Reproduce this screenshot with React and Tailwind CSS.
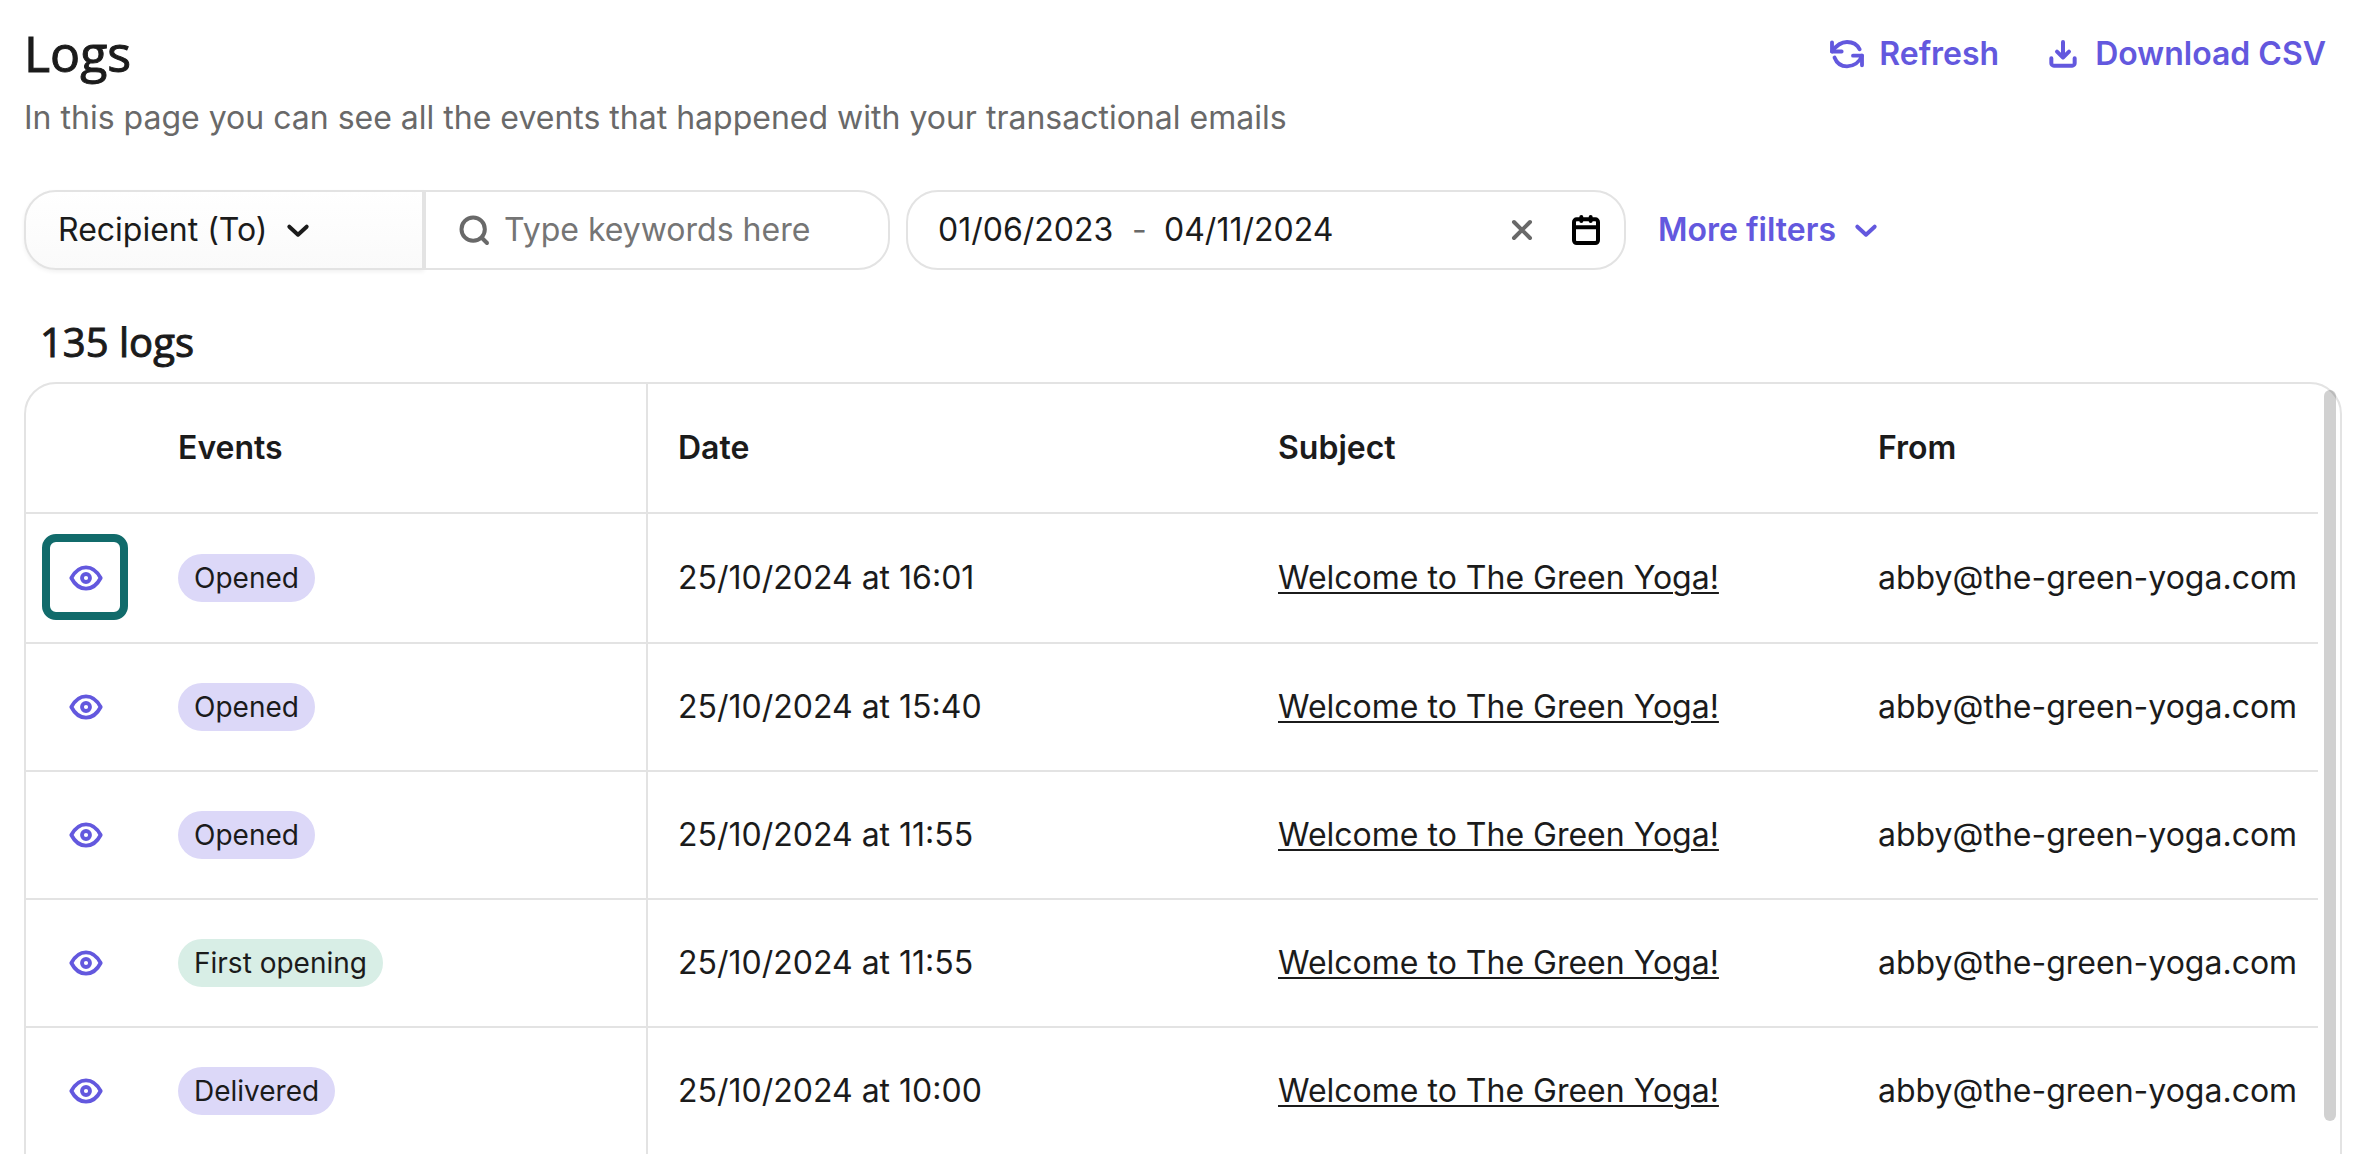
import { useState } from "react";

const rows = [
  { id: 1, event: "Opened", date: "25/10/2024 at 16:01" },
  { id: 2, event: "Opened", date: "25/10/2024 at 15:40" },
  { id: 3, event: "Opened", date: "25/10/2024 at 11:55" },
  { id: 4, event: "First opening", date: "25/10/2024 at 11:55" },
  { id: 5, event: "Delivered", date: "25/10/2024 at 10:00" },
];

const Icon = ({ children, className, width = 2 }) => (
  <svg
    viewBox="0 0 24 24"
    fill="none"
    stroke="currentColor"
    strokeWidth={width}
    strokeLinecap="round"
    strokeLinejoin="round"
    className={className}
    aria-hidden="true"
  >
    {children}
  </svg>
);

const ChevronIcon = ({ className }) => (
  <Icon className={className} width={3}>
    <path d="M5.5 9.5l6.5 6 6.5-6" />
  </Icon>
);

const RefreshIcon = () => (
  <Icon className="size-10" width={2.3}>
    <path d="M3 5v5.500h5.800" />
    <path d="M3 10.500C5.500 7 8.500 4.800 12 4.800c3.500 0 6.200 1.600 7.600 4.400" />
    <path d="M21 18.800V13h-5.400" />
    <path d="M21 13c-1.500 4-5 6.400-9 6.400-3.600 0-6.300-2.200-7.500-5.300" />
  </Icon>
);

const DownloadIcon = () => (
  <Icon className="size-10" width={2.4}>
    <path d="M12 4.800v9.300M8.400 10.600l3.600 3.500 3.600-3.500" />
    <path d="M5 14.600v2.900A1.500 1.500 0 0 0 6.500 19h11a1.500 1.500 0 0 0 1.500-1.500v-2.900" />
  </Icon>
);

const EyeIcon = () => (
  <Icon className="size-10" width={2.3}>
    <path d="M3.200 12C5.200 8.200 8.200 5.600 12 5.600s6.800 2.600 8.800 6.400c-2 3.800-5 6.400-8.800 6.400S5.200 15.800 3.200 12Z" />
    <circle cx="12" cy="12" r="2.400" />
  </Icon>
);

const Badge = ({ label }) => (
  <span
    className={
      "inline-flex h-12 items-center rounded-full px-4 text-[28px] " +
      (label === "First opening" ? "bg-[#d8eee6]" : "bg-[#dcd8f8]")
    }
  >
    {label}
  </span>
);

export default function App() {
  const [keywords, setKeywords] = useState("");
  const [from, setFrom] = useState("01/06/2023");
  const [to, setTo] = useState("04/11/2024");

  const clearDates = () => {
    setFrom("");
    setTo("");
  };

  return (
    <main className="h-screen overflow-hidden bg-white pl-6 pr-4 font-['Inter',sans-serif] text-[32px] leading-10 text-[#1b1b1b]">
      <header className="flex items-start justify-between pt-5">
        <div>
          <h1 className="font-['Open_Sans',sans-serif] text-[50px] font-medium leading-[66px] [-webkit-text-stroke:1px_currentColor]">
            Logs
          </h1>
          <p className="mt-3 text-[#696969]">
            In this page you can see all the events that happened with your
            transactional emails
          </p>
        </div>
        <div className="flex gap-11 pr-4 pt-3.5 font-semibold text-[#6358de]">
          <button type="button" className="flex items-center gap-3">
            <RefreshIcon />
            Refresh
          </button>
          <button type="button" className="flex items-center gap-3">
            <DownloadIcon />
            Download CSV
          </button>
        </div>
      </header>

      <div className="mt-[52px] flex items-center">
        <div className="flex h-20 w-[866px]">
          <button
            type="button"
            aria-haspopup="listbox"
            className="flex w-[400px] items-center gap-3.5 rounded-l-[32px] border-2 border-[#e3e3e3] bg-linear-to-b from-white to-[#fafafa] pl-8 shadow-[0_2px_4px_rgba(0,0,0,0.06)]"
          >
            Recipient (To)
            <ChevronIcon className="size-8" />
          </button>
          <label className="flex min-w-0 flex-1 items-center gap-2.5 rounded-r-[32px] border-2 border-[#e3e3e3] bg-white pl-7 text-[#696969]">
            <Icon className="size-10 shrink-0" width={2.4}>
              <circle cx="11.500" cy="11.500" r="7" />
              <path d="M16.800 16.800l3 3" />
            </Icon>
            <input
              type="text"
              aria-label="Keywords"
              placeholder="Type keywords here"
              value={keywords}
              onChange={(e) => setKeywords(e.target.value)}
              className="w-full min-w-0 outline-none placeholder:text-[#757575]"
            />
          </label>
        </div>

        <div className="ml-4 flex h-20 w-[720px] items-center rounded-[32px] border-2 border-[#e3e3e3] pl-[30px] pr-[18px]">
          <input
            type="text"
            aria-label="Start date"
            value={from}
            onChange={(e) => setFrom(e.target.value)}
            className="w-[194px] outline-none"
          />
          <span className="w-8 text-[#696969]">-</span>
          <input
            type="text"
            aria-label="End date"
            value={to}
            onChange={(e) => setTo(e.target.value)}
            className="min-w-0 flex-1 outline-none"
          />
          <button
            type="button"
            aria-label="Clear dates"
            onClick={clearDates}
            className="mr-6 text-[#696969]"
          >
            <Icon className="size-10" width={2.4}>
              <path d="M7.200 7.200l9.600 9.600M16.800 7.200l-9.600 9.600" />
            </Icon>
          </button>
          <button type="button" aria-label="Open calendar" className="text-black">
            <Icon className="size-10" width={2.4}>
              <rect x="4.800" y="5.600" width="14.400" height="14.200" rx="1.600" />
              <path d="M4.800 10.400h14.400M9.200 4.200v2.400M14.800 4.200v2.400" />
            </Icon>
          </button>
        </div>

        <button
          type="button"
          className="ml-8 flex items-center gap-3.5 font-semibold text-[#6358de]"
        >
          More filters
          <ChevronIcon className="size-8" />
        </button>
      </div>

      <h2 className="mt-12 pl-4 font-['Open_Sans',sans-serif] text-[40px] font-medium leading-[48px] [-webkit-text-stroke:1px_currentColor]">
        135 logs
      </h2>

      <section className="relative mt-4 h-[800px] rounded-t-[32px] border-2 border-[#e3e3e3] pr-[22px]">
        <table className="w-full table-fixed border-separate border-spacing-0 text-left">
          <colgroup>
            <col className="w-[136px]" />
            <col className="w-[486px]" />
            <col className="w-[600px]" />
            <col className="w-[600px]" />
            <col />
          </colgroup>
          <thead>
            <tr className="h-[130px] *:border-b-2 *:border-[#e3e3e3] *:font-semibold">
              <th aria-label="Details" />
              <th className="border-r-2 pl-4">Events</th>
              <th className="pl-[30px]">Date</th>
              <th className="pl-[30px]">Subject</th>
              <th className="pl-[30px]">From</th>
            </tr>
          </thead>
          <tbody>
            {rows.map((row, i) => (
              <tr
                key={row.id}
                className={
                  (i === 0 ? "h-[130px]" : "h-[128px]") +
                  " *:border-b-2 *:border-[#e3e3e3]"
                }
              >
                <td className="pb-0.5 pl-4">
                  <button
                    type="button"
                    aria-label="View log"
                    className={
                      "flex size-[86px] items-center justify-center rounded-[14px] border-8 pl-0.5 pt-0.5 text-[#6358de] " +
                      (i === 0 ? "border-[#116b6b]" : "border-transparent")
                    }
                  >
                    <EyeIcon />
                  </button>
                </td>
                <td className="border-r-2 pl-4">
                  <Badge label={row.event} />
                </td>
                <td className="pl-[30px]">{row.date}</td>
                <td className="pl-[30px]">
                  <a href="#preview" className="underline decoration-2 underline-offset-3">
                    Welcome to The Green Yoga!
                  </a>
                </td>
                <td className="pl-[30px]">abby@the-green-yoga.com</td>
              </tr>
            ))}
          </tbody>
        </table>
        <div className="absolute right-1 top-1.5 h-[731px] w-3 rounded-full bg-black/18" />
      </section>
    </main>
  );
}
